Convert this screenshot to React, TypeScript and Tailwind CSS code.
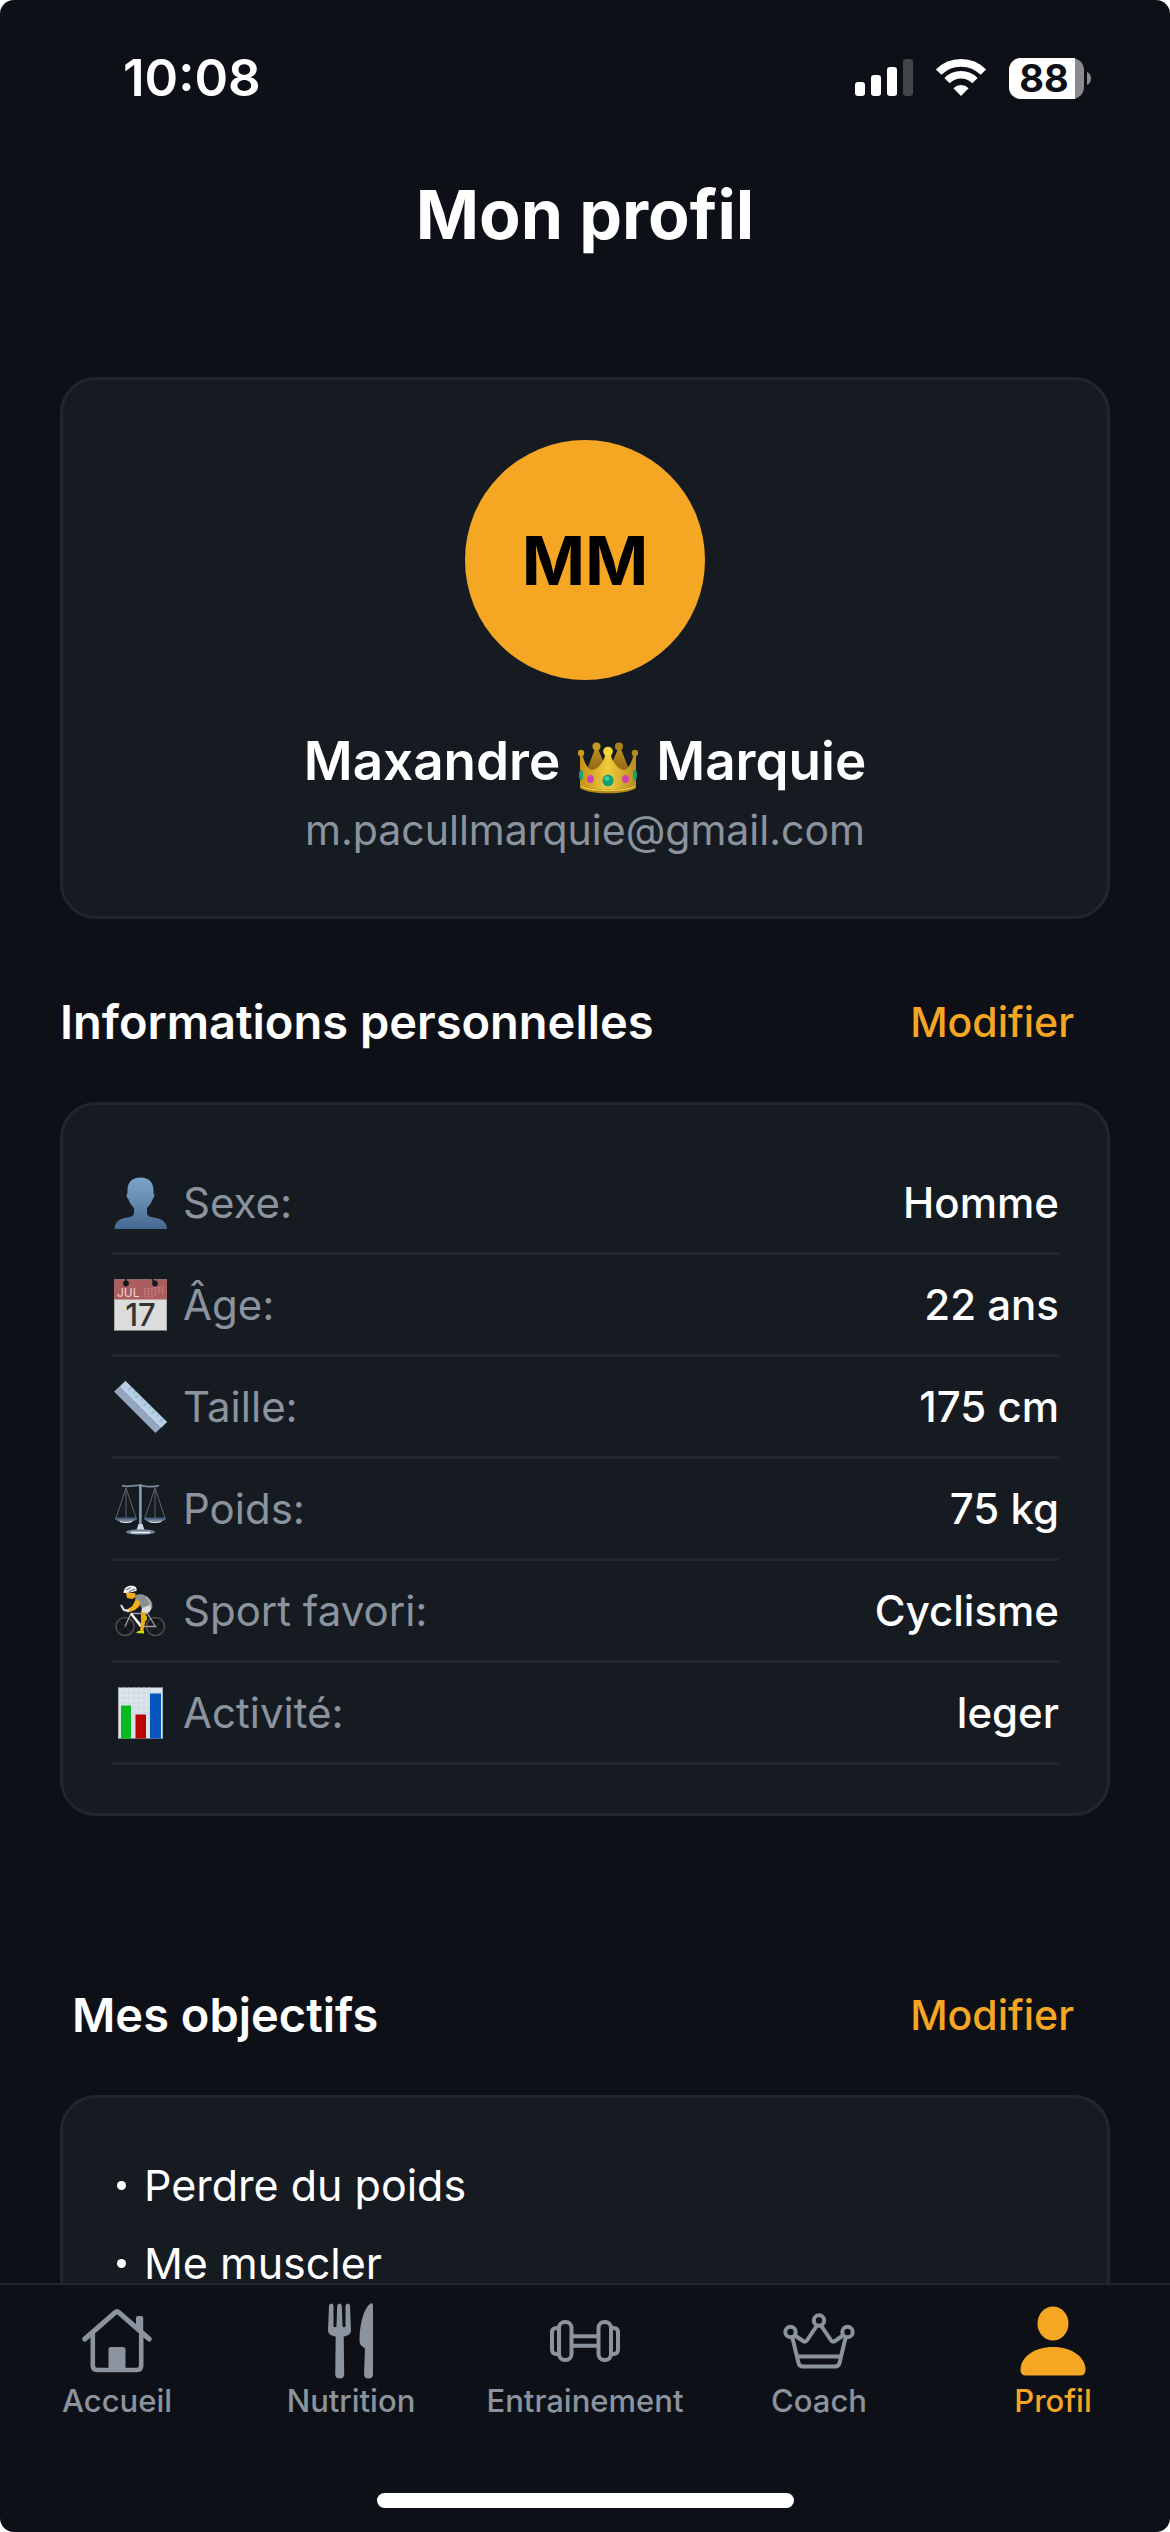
import type { ReactNode } from "react";

function SignalIcon() {
  return (
    <svg width="58" height="38" viewBox="0 0 58 38" fill="#fff" aria-hidden="true">
      <rect x="0" y="23" width="10" height="14" rx="3" />
      <rect x="16" y="16" width="10" height="21" rx="3" />
      <rect x="32" y="8" width="10" height="29" rx="3" />
      <rect x="48" y="0" width="10" height="37" rx="3" opacity="0.22" />
    </svg>
  );
}

function WifiIcon() {
  return (
    <svg width="52" height="38" viewBox="0 0 52 38" fill="none" aria-hidden="true">
      <path d="M3.6 13.2a31.5 31.5 0 0 1 44.8 0" stroke="#fff" strokeWidth="7.6" />
      <path d="M12 21.6a19.8 19.8 0 0 1 28 0" stroke="#fff" strokeWidth="7.4" />
      <path d="M26 37 18.4 29.2a10.9 10.9 0 0 1 15.2 0z" fill="#fff" />
    </svg>
  );
}

function BatteryIcon() {
  return (
    <span className="flex items-center gap-[3px]">
      <span className="flex h-[41px] w-[75px] items-stretch rounded-[12px] bg-[#8b8b8f]">
        <span className="flex w-[66px] items-center justify-center rounded-l-[12px] bg-white pl-1 text-[38px] leading-[41px] font-bold text-[#0d1117]">
          88
        </span>
      </span>
      <svg width="4" height="13" viewBox="0 0 4 13" fill="#8b8b8f" aria-hidden="true">
        <path d="M0 0c2.600 1 4 3.600 4 6.500S2.600 12 0 13z" />
      </svg>
    </span>
  );
}

function CrownEmoji() {
  return (
    <svg className="self-end" width="60" height="52" viewBox="0 0 60 52" role="img" aria-label="couronne">
      <defs>
        <linearGradient id="gold" x1="0" x2="1">
          <stop offset="0" stopColor="#c79217" />
          <stop offset="0.5" stopColor="#f0cc3e" />
          <stop offset="1" stopColor="#b98a1c" />
        </linearGradient>
        <linearGradient id="goldBack" x1="0" x2="0" y1="0" y2="1">
          <stop offset="0" stopColor="#bb8f1e" />
          <stop offset="1" stopColor="#8f6412" />
        </linearGradient>
      </defs>
      <path d="M17 7h3l10 23H8zM40 7h3l9 23H30z" fill="url(#goldBack)" />
      <circle cx="18.500" cy="4.500" r="4" fill="#c49a22" />
      <circle cx="41" cy="4.500" r="4" fill="#ab801c" />
      <path
        d="M2 13h2.500C6.500 21 10 28 14.500 28 20 27 25.500 21 27.500 12h5C34.500 21 40 27 45.500 28 50 28 53.500 21 55.500 13H58v31c-6 8-50 8-56 0z"
        fill="url(#gold)"
      />
      <circle cx="3" cy="11" r="3.200" fill="#c99b1d" />
      <circle cx="57" cy="11" r="3.200" fill="#b38a20" />
      <circle cx="30" cy="9.500" r="4.800" fill="#f4d63a" />
      <path d="M2 42c8 7 48 7 56 0v4c-8 7-48 7-56 0z" fill="#b58715" />
      <path d="M3 44c9 6 45 6 54 0" stroke="#f0cf4d" strokeWidth="1.500" fill="none" />
      <ellipse cx="30" cy="38.500" rx="5.500" ry="6" fill="#12a077" />
      <ellipse cx="29" cy="36.500" rx="2.500" ry="2.300" fill="#4cc9a0" />
      <ellipse cx="12.500" cy="37" rx="3.400" ry="4" fill="#d13fb0" />
      <ellipse cx="47.500" cy="37" rx="3.400" ry="4" fill="#d13fb0" />
      <ellipse cx="3" cy="33" rx="2" ry="5.500" fill="#12a077" />
      <ellipse cx="57" cy="33" rx="2" ry="5.500" fill="#12a077" />
    </svg>
  );
}

function BustEmoji() {
  return (
    <svg width="53" height="52" viewBox="0 0 53 52" aria-hidden="true">
      <defs>
        <linearGradient id="bust" x1="0" x2="0" y1="0" y2="1">
          <stop offset="0" stopColor="#7ba6c9" />
          <stop offset="0.5" stopColor="#6489af" />
          <stop offset="1" stopColor="#456792" />
        </linearGradient>
      </defs>
      <path
        d="M26.500.5c8.500 0 13.200 5 13 13.500v2.500c1.400.2 1 4.500-.8 5.500-1.200 3.800-3.200 6.600-5.700 9v5c0 3.500 4 4 8 4.700 7 1 12 4.800 12 11.300H.5c0-6.500 4.500-10.300 11.500-11.300 4-.7 8-1.200 8-4.700v-5c-2.500-2.400-4.500-5.200-5.700-9-1.800-1-2.200-5.300-.8-5.500V14C13.300 5.500 18 .5 26.500.5z"
        fill="url(#bust)"
      />
    </svg>
  );
}

function CalendarEmoji() {
  return (
    <svg className="overflow-visible" width="53" height="52" viewBox="0 0 53 52" aria-hidden="true">
      <rect x="0" y="0.500" width="53" height="51" fill="#dcdcdc" />
      <rect x="0" y="0.500" width="53" height="20" fill="#ac5d5e" />
      <path d="M12 0v4M38 0l3 4" stroke="#0f1a20" strokeWidth="1.500" />
      <circle cx="12" cy="4.500" r="2.900" fill="#0f1a20" />
      <circle cx="41" cy="4.500" r="2.900" fill="#0f1a20" />
      <path d="M31 9v9M34.500 9v9M38 9v9M41.500 8v9M45 8v7M48.500 8v7" stroke="#c98a8a" strokeWidth="1.400" strokeDasharray="1.500 1" />
      <text x="3" y="17.500" fontSize="12" fill="#ecd6d6" fontFamily="Inter, sans-serif">JUL</text>
      <text x="26.500" y="47" textAnchor="middle" fontSize="31" fontWeight="500" fill="#333" fontFamily="Inter, sans-serif">17</text>
      <path d="M.5 20v31.500M52.500 20v31.500" stroke="#a9a9a9" />
    </svg>
  );
}

function RulerEmoji() {
  return (
    <svg width="53" height="52" viewBox="0 0 53 52" aria-hidden="true">
      <path d="M0 10.500 11.500 0 53 41 41.500 52z" fill="#94a5bf" />
      <path d="M6.500 5 11.500 0 53 41l-5.500 5.200z" fill="#b7cfe6" />
      <path d="M7 5.500 47 45.500" stroke="#dce9f5" strokeWidth="1" />
      <path
        d="m17.500 6-3 3M21.500 10l-2 2M25 13.500l-3.500 3.500M29 17.500l-2 2M33 21.500l-3.500 3.500M37 25.500l-2 2M41 29.500l-3.500 3.500M45 33.500l-2 2M49 37.500l-3.500 3.500"
        stroke="#7e9ab8"
        strokeWidth="1"
      />
    </svg>
  );
}

function ScaleEmoji() {
  return (
    <svg width="53" height="52" viewBox="0 0 53 52" fill="none" aria-hidden="true">
      <path d="M8 2.500c6 2.500 11-1 18.500 0s12.500 2.500 18.500 0" stroke="#7d8b9a" strokeWidth="1.800" />
      <path d="M12 5 2 35M12 5v30M12 5l10 30M41 5 31 35M41 5v30M41 5l10 30" stroke="#59626c" strokeWidth="1" />
      <path d="M26.500 1v44" stroke="#64809f" strokeWidth="2.800" />
      <path d="M26 2v42" stroke="#b4c6d9" strokeWidth="0.800" />
      <path d="M1 35h22c-2.500 6-19.500 6-22 0zM30 35h22c-2.500 6-19.500 6-22 0z" fill="#75869a" />
      <path d="M1 35.500h22M30 35.500h22" stroke="#4a607f" strokeWidth="2" />
      <path d="M6 38.500c3 1.300 9 1.300 12 0M35 38.500c3 1.300 9 1.300 12 0" stroke="#e1e9f1" strokeWidth="1.200" />
      <path d="M24.500 41h4l2 6h-8z" fill="#cfdbe8" />
      <ellipse cx="26.500" cy="49" rx="14.500" ry="2.800" fill="#75869a" />
      <path d="M17 49.500h19" stroke="#eaf1f8" strokeWidth="1.600" />
    </svg>
  );
}

function CyclistEmoji() {
  return (
    <svg width="53" height="52" viewBox="0 0 53 52" fill="none" aria-hidden="true">
      <circle cx="11" cy="41.500" r="9" stroke="#4b4e51" strokeWidth="1.500" fill="#14181c" />
      <circle cx="41.500" cy="41.500" r="9" stroke="#4b4e51" strokeWidth="1.500" fill="#14181c" />
      <path d="m5 36 12 11M5 47l12-11M35.500 36l12 11M35.500 47l12-11" stroke="#2d3134" strokeWidth="0.800" />
      <path d="m11 41.500 6-13 12 13h12.500l-8-13H17" stroke="#9b9ea1" strokeWidth="1.300" />
      <path d="m17 28.500 10 13" stroke="#fff" strokeWidth="2.200" />
      <path d="M22 10c5-2 13 0 16 8 1 4 0 6-2 8l-6 2-5-10-4-2z" fill="#8d8f91" />
      <path d="M32 12c4 3 6 10 3 15" stroke="#b5b5b5" strokeWidth="1.200" />
      <path d="M36 20c1.500 4 0 6-2 8h-7l1-5z" fill="#dddddf" />
      <path d="m22 14 4 3-.5 4L21 25l-7 2.500-3-2 7-4z" fill="#f2b01c" />
      <path d="m27 27 5 .5L31 38l-2 9h-3l1-10z" fill="#f2a80f" />
      <path d="M12 8h9l1 4-4 2-5-1z" fill="#f0ac17" />
      <path d="M9.500 8C10 2 14 0 19 .8c3 .6 4.200 2.600 3.500 5.200-4 .8-8 2.500-13 2z" fill="#f1f1f1" />
      <path d="m12 5 5-2.500M15 6.500l6-2.500" stroke="#5b5d60" strokeWidth="1" />
      <path d="m7 20 3 5 5 1" stroke="#e4e4e4" strokeWidth="2" />
      <path d="m24 46 6-.500v3l-8-.5z" fill="#c4dd16" />
      <path d="m31 31 2-.5v4l-2 2z" fill="#9cc414" />
    </svg>
  );
}

function ChartEmoji() {
  return (
    <svg width="53" height="52" viewBox="0 0 53 52" aria-hidden="true">
      <rect x="4" y="0.500" width="45" height="51" fill="#dde5ec" />
      <path
        d="M4 6h45M4 11h45M4 16h45M4 21h45M4 26h45M4 31h45M10 0v51M15 0v51M20 0v51M25 0v51M30 0v51M35 0v51"
        stroke="#c8d5e0"
        strokeWidth="0.700"
      />
      <rect x="7" y="18.500" width="10" height="33" fill="#08bb1d" />
      <rect x="21.500" y="27.500" width="10.500" height="24" fill="#bd0405" />
      <rect x="36" y="6.500" width="11" height="45" fill="#0557be" />
      <path d="M4.500.5v51M48.500.5v51" stroke="#aab1b8" />
    </svg>
  );
}

function HomeIcon() {
  return (
    <svg width="70" height="64" viewBox="0 0 70 64" fill="none" stroke="currentColor" strokeLinecap="round" strokeLinejoin="round" aria-hidden="true">
      <path d="M2.800 30 33 3.600q2-1.800 4 0L67.200 30" strokeWidth="5" />
      <path d="M10.800 25v31.500q0 4.500 4.500 4.500h39.400q4.500 0 4.500-4.500V25" strokeWidth="4.600" />
      <path d="M54 17V9q0-2 2-2h3.200q2 0 2 2v15z" fill="currentColor" stroke="none" />
      <path d="M26.500 62V40.500q0-2.500 2.500-2.500h12q2.500 0 2.500 2.500V62z" fill="currentColor" stroke="none" />
    </svg>
  );
}

function CutleryIcon() {
  return (
    <svg width="46" height="76" viewBox="0 0 46 76" fill="currentColor" aria-hidden="true">
      <path d="M1 3Q1.200.5 3.200.5T5.500 3v20q0 1.200 1.400 1.200T8.500 23L9.200 3q.2-2.500 2.300-2.500T13.800 3l.7 20q.1 1.200 1.600 1.200t1.400-1.200V3q.2-2.500 2.300-2.500T22 3l1 24.500c0 3.500-3 5.500-7.300 6L16.200 71q0 4.500-4.500 4.500T7.200 71l.5-37.500C3.500 33 0 31 0 27.500z" />
      <path d="M45 2.500V71q0 4.500-4.500 4.500T36 71l1-25.500-3.500-2.800q-2-1.500-2-4.500c0-15 3-28 8.500-35.500Q45-2 45 2.500z" />
    </svg>
  );
}

function DumbbellIcon() {
  return (
    <svg width="70" height="42" viewBox="0 0 70 42" fill="none" stroke="currentColor" strokeWidth="4" aria-hidden="true">
      <rect x="9" y="2" width="12.500" height="38" rx="6" />
      <rect x="48.500" y="2" width="12.500" height="38" rx="6" />
      <path d="M9 8H6.500Q2 8 2 12.500v17Q2 34 6.500 34H9M61 8h2.500q4.500 0 4.500 4.500v17q0 4.500-4.500 4.500H61M22 16.200h26M22 25.800h26" />
    </svg>
  );
}

function CoachIcon() {
  return (
    <svg width="72" height="56" viewBox="0 0 72 56" fill="none" stroke="currentColor" strokeWidth="4" strokeLinejoin="round" aria-hidden="true">
      <circle cx="36" cy="7.500" r="5.200" />
      <circle cx="7.500" cy="19" r="5.200" />
      <circle cx="64.500" cy="19" r="5.200" />
      <path d="M12 22.500 20 28q2.500 1.500 4.200-1L34 12.500M60 22.500 52 28q-2.500 1.500-4.200-1L38 12.500" />
      <path d="m9.500 25 6 25q.8 3.500 4.500 3.500h32q3.700 0 4.500-3.500l6-25M14 43.500h44" />
    </svg>
  );
}

function ProfileIcon() {
  return (
    <svg width="66" height="70" viewBox="0 0 66 70" fill="currentColor" aria-hidden="true">
      <ellipse cx="33" cy="17.500" rx="15.500" ry="17" />
      <path d="M6 69.500q-5.500 0-5.500-5.500C.5 51 14 41 33 41s32.500 10 32.500 23q0 5.500-5.500 5.500z" />
    </svg>
  );
}

function SectionHeader({ title, className }: { title: string; className: string }) {
  return (
    <div className={`flex items-center justify-between pr-9 ${className}`}>
      <h2 className="text-[47px] leading-[60px] font-semibold">{title}</h2>
      <button type="button" aria-label={`Modifier ${title}`} className="text-[41px] leading-[60px] font-medium text-[#f5a623]">
        Modifier
      </button>
    </div>
  );
}

const infos: { icon: ReactNode; label: string; value: string }[] = [
  { icon: <BustEmoji />, label: "Sexe:", value: "Homme" },
  { icon: <CalendarEmoji />, label: "Âge:", value: "22 ans" },
  { icon: <RulerEmoji />, label: "Taille:", value: "175 cm" },
  { icon: <ScaleEmoji />, label: "Poids:", value: "75 kg" },
  { icon: <CyclistEmoji />, label: "Sport favori:", value: "Cyclisme" },
  { icon: <ChartEmoji />, label: "Activité:", value: "leger" },
];

const goals = ["Perdre du poids", "Me muscler"];

const tabs: { icon: ReactNode; label: string; active?: boolean }[] = [
  { icon: <HomeIcon />, label: "Accueil" },
  { icon: <CutleryIcon />, label: "Nutrition" },
  { icon: <DumbbellIcon />, label: "Entrainement" },
  { icon: <CoachIcon />, label: "Coach" },
  { icon: <ProfileIcon />, label: "Profil", active: true },
];

const card = "rounded-[36px] border-[3px] border-[#21262d] bg-[#161b22]";

export default function App() {
  return (
    <div className="h-screen bg-white font-['Inter',sans-serif] text-white">
      <div className="flex h-full flex-col overflow-hidden rounded-[14px] bg-[#0d1117]">
        <div className="flex h-[156px] shrink-0 items-center justify-between pr-[79px] pl-[123px]">
          <span className="text-[51px] leading-[60px] font-semibold">10:08</span>
          <div className="flex items-center gap-[22px]">
            <SignalIcon />
            <WifiIcon />
            <BatteryIcon />
          </div>
        </div>

        <main className="min-h-0 flex-1 overflow-hidden px-[60px]">
          <h1 className="mt-4 text-center text-[68px] leading-[84px] font-bold">Mon profil</h1>

          <section className={`mt-[121px] flex flex-col items-center pt-[60px] pb-[59px] ${card}`}>
            <div className="flex size-[240px] items-center justify-center rounded-full bg-[#f5a623] text-[68px] font-bold text-black">
              MM
            </div>
            <p className="mt-12 flex items-center gap-[18px] text-[53px] leading-[66px] font-semibold">
              <span>Maxandre</span>
              <CrownEmoji />
              <span>Marquie</span>
            </p>
            <p className="mt-[9px] text-[41px] leading-[54px] text-[#8b949e]">m.pacullmarquie@gmail.com</p>
          </section>

          <SectionHeader title="Informations personnelles" className="mt-[73px]" />
          <dl className={`mt-[50px] p-12 ${card}`}>
            {infos.map(({ icon, label, value }) => (
              <div key={label} className="flex h-[102px] items-center justify-between border-b-[3px] border-[#21262d] text-[42px]">
                <dt className="flex items-center gap-4 pl-[3px] text-[#8b949e]">
                  {icon}
                  {label}
                </dt>
                <dd className="font-medium">{value}</dd>
              </div>
            ))}
          </dl>

          <SectionHeader title="Mes objectifs" className="mt-[169px] pl-3" />
          <ul className={`mt-[50px] p-12 ${card}`}>
            {goals.map((goal) => (
              <li key={goal} className="flex h-[78px] items-center gap-[18px] pl-1.5 text-[43px]">
                <span className="size-[9px] rounded-full bg-white" />
                {goal}
              </li>
            ))}
          </ul>
        </main>

        <nav className="shrink-0 border-t-2 border-[#21262d] pt-4 pb-6" aria-label="Navigation principale">
          <div className="grid grid-cols-5">
            {tabs.map(({ icon, label, active }) => (
              <a
                key={label}
                href="#"
                aria-current={active ? "page" : undefined}
                className={`flex flex-col items-center text-[31px] leading-10 font-medium ${active ? "text-[#f5a623]" : "text-[#8b949e]"}`}
              >
                <span className="flex h-20 items-center">{icon}</span>
                {label}
              </a>
            ))}
          </div>
          <div className="mx-auto mt-[72px] h-[15px] w-[417px] rounded-full bg-white" />
        </nav>
      </div>
    </div>
  );
}
